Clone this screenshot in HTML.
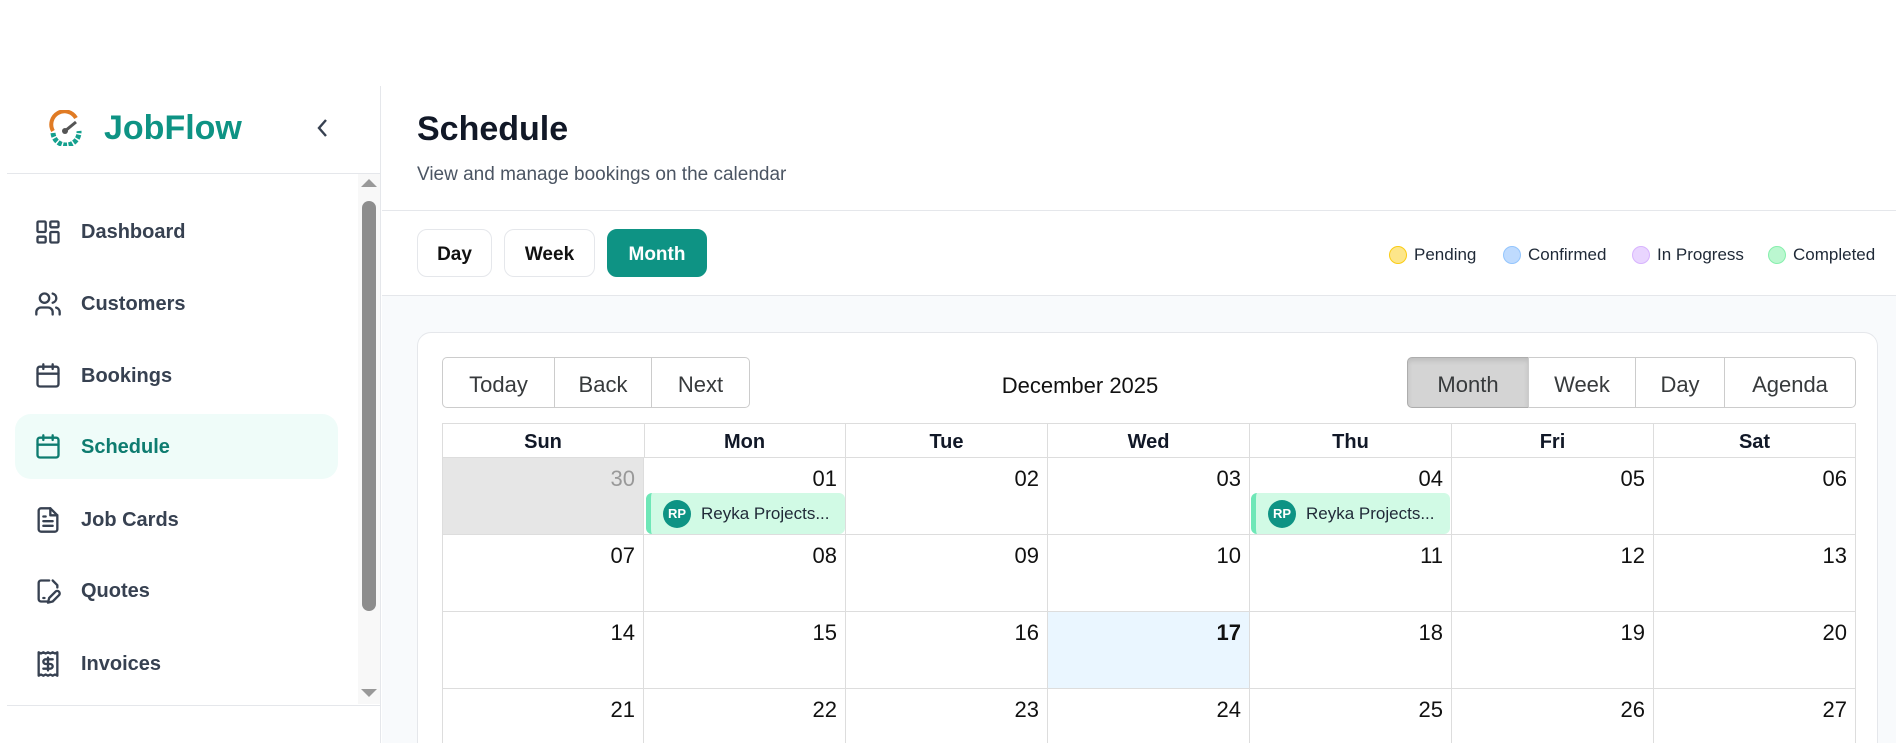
<!DOCTYPE html>
<html><head><meta charset="utf-8"><style>
*{box-sizing:border-box;margin:0;padding:0}
html,body{width:1896px;height:743px;overflow:hidden}
body{background:#fff;font-family:"Liberation Sans",sans-serif;color:#111827}
#w{position:relative;width:1896px;height:743px;overflow:hidden}
.abs{position:absolute}
.side{left:0;top:86px;width:381px;height:657px;border-right:1px solid #e5e7eb}
.nav{position:absolute;left:15px;width:323px;height:65px;display:flex;align-items:center;font-size:20px;font-weight:700;color:#374151}
.nav svg{position:absolute;left:19px;width:28px;height:28px;fill:none;stroke:#374151;stroke-width:2;stroke-linecap:round;stroke-linejoin:round}
.nav span{position:absolute;left:66px;top:22px}
.btn{position:absolute;top:229px;height:48px;border:1px solid #e5e7eb;border-radius:10px;font-size:19px;font-weight:700;display:flex;align-items:center;justify-content:center;background:#fff;color:#111;padding-top:3px}
.leg{position:absolute;top:245px;font-size:17px;color:#1f2937;display:flex;align-items:center}
.leg i{display:inline-block;width:18px;height:18px;border-radius:50%;margin-right:7px;border:1px solid}
.tb{position:absolute;top:357px;height:51px;border:1px solid #ccc;font-size:22px;color:#373a3c;display:flex;align-items:center;justify-content:center;padding-top:4px}
.hd{position:absolute;top:423px;height:34px;font-size:20px;font-weight:700;text-align:center;line-height:38px;border-right:1px solid #ddd}
.cell{position:absolute;width:202px;border-right:1px solid #ddd;border-bottom:1px solid #ddd;font-size:22px;text-align:right;padding:8px 8px 0 0;color:#111}
.ev{position:absolute;height:41px;background:#d1fae5;border-left:5px solid #6ee7b7;border-radius:6px;display:flex;align-items:center;font-size:17px;color:#1f2937}
.ev b{width:28px;height:28px;border-radius:50%;background:#0e9384;color:#fff;font-size:13px;display:flex;align-items:center;justify-content:center;margin:0 10px 0 12px}
</style></head><body><div id="w">
<div class="abs side">
  <svg class="abs" style="left:48px;top:24px" width="36" height="36" viewBox="0 0 36 36"><path d="M5 21 A13 13 0 0 1 28 8" fill="none" stroke="#e07b24" stroke-width="4"/><path d="M5 23 A13 13 0 0 0 31 21" fill="none" stroke="#14a08e" stroke-width="5" stroke-dasharray="4 1.5"/><path d="M17 21 L28 12" stroke="#555" stroke-width="3"/><circle cx="17" cy="21" r="3" fill="#555"/></svg>
  <div class="abs" style="left:104px;top:23px;font-size:34px;font-weight:700;color:#0e9384">JobFlow</div>
  <svg class="abs" style="left:315px;top:31px" width="16" height="22" viewBox="0 0 16 22"><path d="M11 3 L4 11 L11 19" fill="none" stroke="#374151" stroke-width="2.4"/></svg>
  <div class="abs" style="left:7px;top:87px;width:374px;border-top:1px solid #e5e7eb"></div>
  <div class="abs" style="left:7px;top:619px;width:374px;border-top:1px solid #e5e7eb"></div>
  <div class="abs" style="left:358px;top:88px;width:22px;height:530px;background:#f8f8f8"></div>
  <div class="abs" style="left:362px;top:115px;width:14px;height:410px;background:#8d8d8d;border-radius:7px"></div>
  <div class="abs" style="left:361px;top:93px;border:8px solid transparent;border-bottom:8px solid #999;border-top:0"></div>
  <div class="abs" style="left:361px;top:603px;border:8px solid transparent;border-top:8px solid #999;border-bottom:0"></div>
</div>
<div class="nav" style="top:199px"><svg viewBox="0 0 24 24"><rect x="3" y="3" width="7" height="9" rx="1"/><rect x="14" y="3" width="7" height="5" rx="1"/><rect x="14" y="12" width="7" height="9" rx="1"/><rect x="3" y="16" width="7" height="5" rx="1"/></svg><span>Dashboard</span></div>
<div class="nav" style="top:271px"><svg viewBox="0 0 24 24"><circle cx="9" cy="7" r="4"/><path d="M2 21v-2a4 4 0 0 1 4-4h6a4 4 0 0 1 4 4v2M16 3.1a4 4 0 0 1 0 7.8M22 21v-2a4 4 0 0 0-3-3.9"/></svg><span>Customers</span></div>
<div class="nav" style="top:343px"><svg viewBox="0 0 24 24"><rect x="3" y="4" width="18" height="17" rx="2"/><path d="M3 10h18M8 2v4M16 2v4"/></svg><span>Bookings</span></div>
<div class="nav" style="top:414px;background:#effcf9;border-radius:16px;color:#0e7c70"><svg viewBox="0 0 24 24" style="stroke:#0e7c70"><rect x="3" y="4" width="18" height="17" rx="2"/><path d="M3 10h18M8 2v4M16 2v4"/></svg><span>Schedule</span></div>
<div class="nav" style="top:487px"><svg viewBox="0 0 24 24"><path d="M14 2H6a2 2 0 0 0-2 2v16a2 2 0 0 0 2 2h12a2 2 0 0 0 2-2V8z"/><path d="M14 2v6h6M8 13h8M8 17h8M8 9h2"/></svg><span>Job Cards</span></div>
<div class="nav" style="top:558px"><svg viewBox="0 0 24 24"><path d="M13 3H6a2 2 0 0 0-2 2v14a2 2 0 0 0 2 2h6M20 9V7l-4-4M8 18h1M18.4 12.6a2 2 0 1 1 3 3L16 21l-4 1 1-4z"/></svg><span>Quotes</span></div>
<div class="nav" style="top:631px"><svg viewBox="0 0 24 24"><path d="M4 2v20l2-1 2 1 2-1 2 1 2-1 2 1 2-1 2 1V2l-2 1-2-1-2 1-2-1-2 1-2-1-2 1z"/><path d="M16 8h-6a2 2 0 1 0 0 4h4a2 2 0 1 1 0 4H8M12 17.5v-11"/></svg><span>Invoices</span></div>

<div class="abs" style="left:417px;top:110px;font-size:34px;font-weight:700;color:#111827">Schedule</div>
<div class="abs" style="left:417px;top:164px;font-size:19px;color:#4b5563">View and manage bookings on the calendar</div>
<div class="abs" style="left:382px;top:210px;width:1514px;border-top:1px solid #e5e7eb"></div>
<div class="btn" style="left:417px;width:75px">Day</div>
<div class="btn" style="left:504px;width:91px">Week</div>
<div class="btn" style="left:607px;width:100px;background:#0e9384;border-color:#0e9384;color:#fff">Month</div>
<div class="leg" style="left:1389px"><i style="background:#fde68a;border-color:#facc15"></i>Pending</div>
<div class="leg" style="left:1503px"><i style="background:#bfdbfe;border-color:#93c5fd"></i>Confirmed</div>
<div class="leg" style="left:1632px"><i style="background:#e9d5ff;border-color:#d8b4fe"></i>In Progress</div>
<div class="leg" style="left:1768px"><i style="background:#bbf7d0;border-color:#86efac"></i>Completed</div>
<div class="abs" style="left:382px;top:295px;width:1514px;height:448px;background:#f8fafc;border-top:1px solid #e5e7eb"></div>
<div class="abs" style="left:417px;top:332px;width:1461px;height:480px;background:#fff;border:1px solid #e5e7eb;border-radius:14px"></div>
<div class="tb" style="left:442px;width:113px;border-radius:5px 0 0 5px">Today</div>
<div class="tb" style="left:554px;width:98px">Back</div>
<div class="tb" style="left:651px;width:99px;border-radius:0 5px 5px 0">Next</div>
<div class="abs" style="left:900px;top:373px;width:360px;text-align:center;font-size:22px;color:#111">December 2025</div>
<div class="tb" style="left:1407px;width:122px;border-radius:5px 0 0 5px;background:#d4d4d4;border-color:#adadad;box-shadow:inset 0 3px 5px rgba(0,0,0,.1)">Month</div>
<div class="tb" style="left:1528px;width:108px">Week</div>
<div class="tb" style="left:1635px;width:90px">Day</div>
<div class="tb" style="left:1724px;width:132px;border-radius:0 5px 5px 0">Agenda</div>
<div class="abs" style="left:442px;top:423px;width:1414px;height:400px;border:1px solid #ddd;border-right:0"></div>
<div class="hd" style="left:442px;width:203px">Sun</div><div class="hd" style="left:644px;width:202px">Mon</div><div class="hd" style="left:846px;width:202px">Tue</div><div class="hd" style="left:1048px;width:202px">Wed</div><div class="hd" style="left:1250px;width:202px">Thu</div><div class="hd" style="left:1452px;width:202px">Fri</div><div class="hd" style="left:1654px;width:202px">Sat</div>
<div class="abs" style="left:442px;top:457px;width:1414px;border-top:1px solid #ddd"></div>
<div class="cell" style="left:443px;top:458px;height:77px;width:201px;background:#e6e6e6;color:#999">30</div>
<div class="cell" style="left:644px;top:458px;height:77px">01</div><div class="cell" style="left:846px;top:458px;height:77px">02</div><div class="cell" style="left:1048px;top:458px;height:77px">03</div><div class="cell" style="left:1250px;top:458px;height:77px">04</div><div class="cell" style="left:1452px;top:458px;height:77px">05</div><div class="cell" style="left:1654px;top:458px;height:77px">06</div>
<div class="cell" style="left:443px;top:535px;height:77px;width:201px">07</div><div class="cell" style="left:644px;top:535px;height:77px">08</div><div class="cell" style="left:846px;top:535px;height:77px">09</div><div class="cell" style="left:1048px;top:535px;height:77px">10</div><div class="cell" style="left:1250px;top:535px;height:77px">11</div><div class="cell" style="left:1452px;top:535px;height:77px">12</div><div class="cell" style="left:1654px;top:535px;height:77px">13</div>
<div class="cell" style="left:443px;top:612px;height:77px;width:201px">14</div><div class="cell" style="left:644px;top:612px;height:77px">15</div><div class="cell" style="left:846px;top:612px;height:77px">16</div><div class="cell" style="left:1048px;top:612px;height:77px;background:#eaf6ff;font-weight:700">17</div><div class="cell" style="left:1250px;top:612px;height:77px">18</div><div class="cell" style="left:1452px;top:612px;height:77px">19</div><div class="cell" style="left:1654px;top:612px;height:77px">20</div>
<div class="cell" style="left:443px;top:689px;height:77px;width:201px">21</div><div class="cell" style="left:644px;top:689px;height:77px">22</div><div class="cell" style="left:846px;top:689px;height:77px">23</div><div class="cell" style="left:1048px;top:689px;height:77px">24</div><div class="cell" style="left:1250px;top:689px;height:77px">25</div><div class="cell" style="left:1452px;top:689px;height:77px">26</div><div class="cell" style="left:1654px;top:689px;height:77px">27</div>
<div class="ev" style="left:646px;top:493px;width:199px"><b>RP</b>Reyka Projects...</div>
<div class="ev" style="left:1251px;top:493px;width:199px"><b>RP</b>Reyka Projects...</div>
</div></body></html>
